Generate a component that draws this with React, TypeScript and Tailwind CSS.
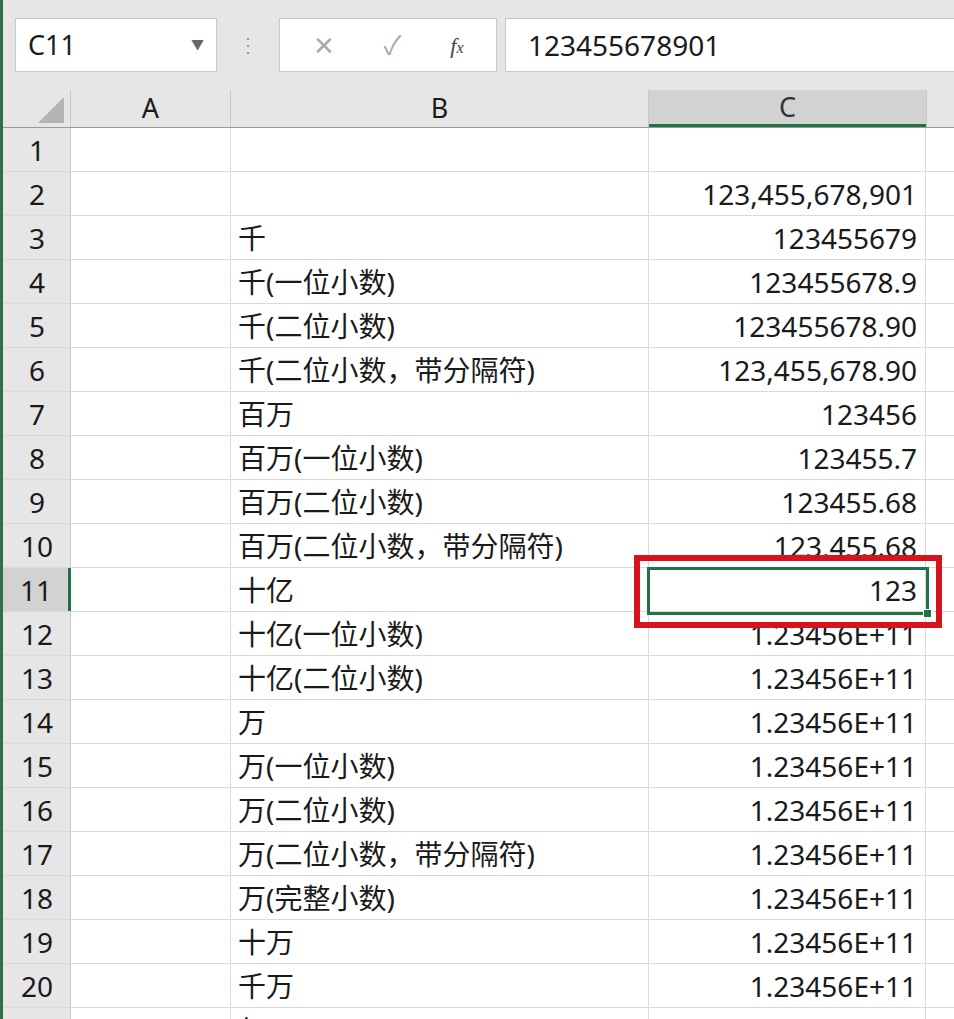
import React from "react";

const rows: [string, string][] = [
  ["", ""],
  ["", "123,455,678,901"],
  ["千", "123455679"],
  ["千(一位小数)", "123455678.9"],
  ["千(二位小数)", "123455678.90"],
  ["千(二位小数，带分隔符)", "123,455,678.90"],
  ["百万", "123456"],
  ["百万(一位小数)", "123455.7"],
  ["百万(二位小数)", "123455.68"],
  ["百万(二位小数，带分隔符)", "123,455.68"],
  ["十亿", "123"],
  ["十亿(一位小数)", "1.23456E+11"],
  ["十亿(二位小数)", "1.23456E+11"],
  ["万", "1.23456E+11"],
  ["万(一位小数)", "1.23456E+11"],
  ["万(二位小数)", "1.23456E+11"],
  ["万(二位小数，带分隔符)", "1.23456E+11"],
  ["万(完整小数)", "1.23456E+11"],
  ["十万", "1.23456E+11"],
  ["千万", "1.23456E+11"],
  ["亿", ""],
];

const font = { fontFamily: '"Noto Sans", "Noto Sans CJK SC", sans-serif' };

export default function App() {
  return (
    <div className="w-[954px] h-[1019px] overflow-hidden bg-[#e6e6e6] relative text-[#1a1a1a]" style={font}>
      <div className="absolute left-0 top-0 bottom-0 w-[3px] bg-[#2f6f4a]" />
      <div className="flex items-center h-[90px] pl-[15px] gap-0">
        <div className="w-[202px] h-[54px] bg-white border border-[#c8c8c8] flex items-center justify-between px-[12px] text-[27px]">
          <span>C11</span>
          <span className="text-[#666] text-[13px]">▼</span>
        </div>
        <div className="w-[62px] flex justify-center text-[#999] text-[20px] leading-none">⋮</div>
        <div className="w-[218px] h-[54px] bg-white border border-[#c8c8c8] flex items-center justify-around px-2 text-[#aaa] text-[26px]">
          <span>✕</span>
          <span>✓</span>
          <span className="italic text-[#444] text-[22px]" style={{ fontFamily: '"Liberation Serif", serif' }}>f<span className="text-[16px]">x</span></span>
        </div>
        <div className="ml-[8px] flex-1 h-[54px] bg-white border border-[#c8c8c8] border-r-0 flex items-center pl-[22px] text-[28px]">
          123455678901
        </div>
      </div>
      <div className="bg-white">
        <div className="flex h-[38px] bg-[#e6e6e6] text-[27px] border-b border-[#9a9a9a]">
          <div className="w-[71px] relative border-r border-[#c8c8c8]">
            <div className="absolute right-[6px] bottom-[4px] w-0 h-0 border-l-[26px] border-l-transparent border-b-[26px] border-b-[#b4b4b4]" />
          </div>
          <div className="w-[160px] flex items-center justify-center border-r border-[#c8c8c8]">A</div>
          <div className="w-[418px] flex items-center justify-center border-r border-[#c8c8c8]">B</div>
          <div className="w-[277px] flex items-center justify-center bg-[#d2d2d2] border-b-[3px] border-[#217346] text-[#333]">C</div>
          <div className="flex-1 border-l border-[#c8c8c8]" />
        </div>
        {rows.map(([b, c], i) => {
          const sel = i === 10;
          return (
            <div key={i} className="flex h-[44px] text-[28px] border-b border-[#dadada]">
              <div className={`w-[71px] flex items-center justify-center pl-[4px] border-r ${sel ? "bg-[#d2d2d2] border-[#217346] border-r-[3px]" : "bg-[#e6e6e6] border-[#c8c8c8]"}`}>{i + 1}</div>
              <div className="w-[160px] border-r border-[#dadada]" />
              <div className="w-[418px] border-r border-[#dadada] flex items-center pl-[7px] whitespace-nowrap">{b}</div>
              <div className="w-[277px] border-r border-[#dadada] flex items-center justify-end pr-[8px] whitespace-nowrap">{c}</div>
              <div className="flex-1" />
            </div>
          );
        })}
      </div>
      <div className="absolute left-[647px] top-[567px] w-[282px] h-[48px] border-[3px] border-[#217346]">
        <div className="absolute right-[-6px] bottom-[-6px] w-[9px] h-[9px] bg-[#217346] border border-white" />
      </div>
      <div className="absolute left-[634px] top-[555px] w-[308px] h-[73px] border-[6px] border-[#d7141e]" />
    </div>
  );
}
